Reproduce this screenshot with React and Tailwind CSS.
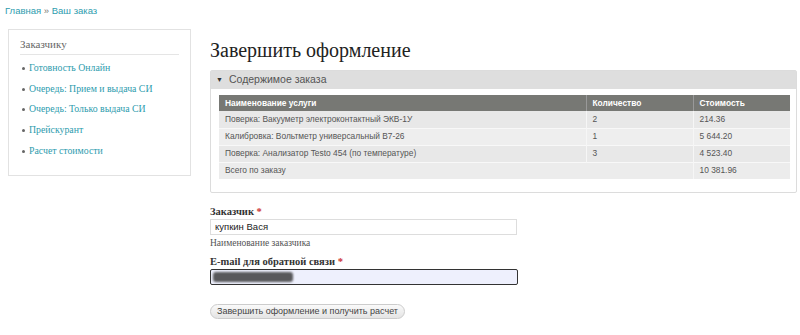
import React from 'react';

const LINKS = [
  'Готовность Онлайн',
  'Очередь: Прием и выдача СИ',
  'Очередь: Только выдача СИ',
  'Прейскурант',
  'Расчет стоимости',
];

const ROWS = [
  { name: 'Поверка: Вакууметр электроконтактный ЭКВ-1У', qty: '2', cost: '214.36' },
  { name: 'Калибровка: Вольтметр универсальный В7-26', qty: '1', cost: '5 644.20' },
  { name: 'Поверка: Анализатор Testo 454 (по температуре)', qty: '3', cost: '4 523.40' },
];

const serif = { fontFamily: '"Liberation Serif", "DejaVu Serif", serif' };
const sans = { fontFamily: '"Liberation Sans", Arial, sans-serif' };

export default function App() {
  return (
    <div className="w-[800px] h-[335px] bg-white relative overflow-hidden" style={sans}>
      <div className="pl-[5px] pt-[4px] text-[9.5px] text-[#2d9cae] h-[25px]">
        Главная <span className="text-[#777]">»</span> Ваш заказ
      </div>

      <div className="flex">
        {/* sidebar */}
        <div className="ml-[8px] mt-[4px] w-[183px] h-[147px] border border-[#e2e2e2] px-[11px] pt-[7px] shrink-0">
          <div className="text-[11px] leading-[14px] text-[#666] pb-[3px] border-b border-[#e5e5e5]" style={serif}>Заказчику</div>
          <ul className="mt-[3px] flex flex-col">
            {LINKS.map(l => (
              <li key={l} className="h-[20.7px] flex items-center gap-[4px] text-[9.8px] text-[#2d9cae]" style={serif}>
                <span className="w-[3px] h-[3px] rounded-full bg-[#666] ml-[2px]" />
                {l}
              </li>
            ))}
          </ul>
        </div>

        {/* main */}
        <div className="ml-[19px] w-[588px]">
          <h1 className="text-[20px] text-[#222] leading-none mt-[15px] h-[30px]" style={serif}>Завершить оформление</h1>

          <div className="border border-[#dcdcdc] rounded-[2px] w-[587px] h-[123px]">
            <div className="h-[18px] bg-[#dedede] flex items-center pl-[5px] text-[10.5px] text-[#555]">
              <span className="text-[7px] mr-[6px] text-[#333]">▼</span>
              Содержимое заказа
            </div>
            <table className="ml-[8px] mt-[6px] w-[571px] border-collapse text-[8.4px]">
              <thead>
                <tr className="bg-[#777874] text-white font-bold h-[16px]">
                  <td className="pl-[6px] w-[367px]">Наименование услуги</td>
                  <td className="pl-[6px] w-[107px] border-l border-[#999]">Количество</td>
                  <td className="pl-[6px] border-l border-[#999]">Стоимость</td>
                </tr>
              </thead>
              <tbody className="text-[#555]">
                {ROWS.map((r, i) => (
                  <tr key={i} className={`h-[17px] border-b border-[#f8f8f8] ${i % 2 ? 'bg-[#eeeeee]' : 'bg-[#e8e8e8]'}`}>
                    <td className="pl-[6px]">{r.name}</td>
                    <td className="pl-[6px] border-l border-[#f6f6f6]">{r.qty}</td>
                    <td className="pl-[6px] border-l border-[#f6f6f6]">{r.cost}</td>
                  </tr>
                ))}
                <tr className="h-[17px] bg-[#ececec]">
                  <td className="pl-[6px]" colSpan={2}>Всего по заказу</td>
                  <td className="pl-[6px] border-l border-[#f6f6f6]">10 381.96</td>
                </tr>
              </tbody>
            </table>
          </div>

          <div className="mt-[13px] text-[10.5px] font-bold text-[#333] leading-[12px]" style={serif}>
            Заказчик <span className="text-[#c33]">*</span>
          </div>
          <div className="mt-[1px] w-[307px] h-[16px] border border-[#ddd] flex items-center pl-[4px] text-[9.5px] text-[#222]">
            купкин Вася
          </div>
          <div className="mt-[2px] text-[9.5px] text-[#555] leading-[12px]" style={serif}>Наименование заказчика</div>

          <div className="mt-[7px] text-[10.5px] font-bold text-[#333] leading-[12px]" style={serif}>
            E-mail для обратной связи <span className="text-[#c33]">*</span>
          </div>
          <div className="mt-[1px] w-[308px] h-[16px] border border-[#333] rounded-[2px] bg-[#eef0fd] flex items-center pl-[2px]">
            <span className="w-[80px] h-[10px] bg-[#333] rounded-[3px] blur-[1px] opacity-80" />
          </div>

          <button className="mt-[19px] w-[195px] h-[15px] rounded-full border border-[#ccc] bg-gradient-to-b from-[#fafafa] to-[#e4e4e4] text-[9px] text-[#444] flex items-center justify-center whitespace-nowrap">
            Завершить оформление и получить расчет
          </button>
        </div>
      </div>
    </div>
  );
}
